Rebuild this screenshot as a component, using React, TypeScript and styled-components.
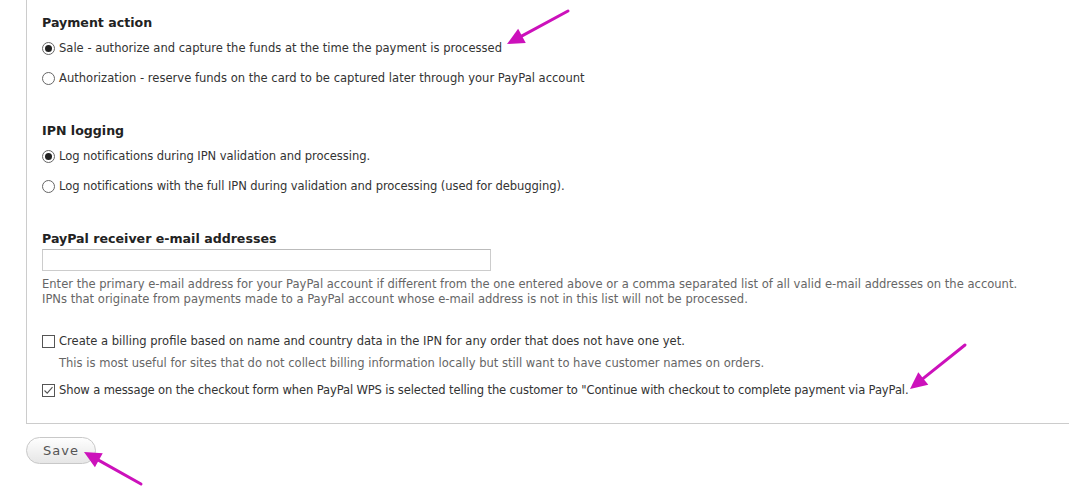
import React from 'react';
import styled, { createGlobalStyle } from 'styled-components';

const GlobalStyle = createGlobalStyle`
  html, body {
    margin: 0;
    padding: 0;
    background: #fff;
  }
  body {
    font-family: 'DejaVu Sans', Verdana, sans-serif;
    font-size: 11.55px;
    color: #333;
  }
`;

const Page = styled.div`
  position: relative;
  width: 1069px;
  height: 493px;
  overflow: hidden;
`;

const Fieldset = styled.div`
  margin-left: 26px;
  border-left: 1px solid #ccc;
  border-bottom: 1px solid #ccc;
  padding: 15px 15px 24px 15px;
  display: flex;
  flex-direction: column;
`;

const Section = styled.div<{ $gap?: number }>`
  display: flex;
  flex-direction: column;
  margin-bottom: ${(p) => p.$gap ?? 36}px;
`;

const Heading = styled.div<{ $after?: number }>`
  font-weight: bold;
  font-size: 12.6px;
  line-height: 16px;
  color: #222;
  margin-bottom: ${(p) => p.$after ?? 8}px;
`;

const OptionList = styled.div`
  display: flex;
  flex-direction: column;
  gap: 12px;
`;

const Option = styled.label`
  display: flex;
  align-items: center;
  gap: 4px;
  height: 18px;
  line-height: 18px;
  color: #333;
`;

const OptionText = styled.span<{ $spacing?: number }>`
  letter-spacing: ${(p) => p.$spacing ?? 0}px;
`;

const RadioMark = styled.span<{ $checked?: boolean }>`
  box-sizing: border-box;
  width: 13px;
  height: 13px;
  border-radius: 50%;
  border: 1px solid #666;
  background: #fff;
  display: flex;
  align-items: center;
  justify-content: center;
  flex-shrink: 0;
  &::after {
    content: '';
    width: 7px;
    height: 7px;
    border-radius: 50%;
    background: ${(p) => (p.$checked ? '#222' : 'transparent')};
  }
`;

const BoxMark = styled.span`
  box-sizing: border-box;
  width: 13px;
  height: 13px;
  border: 1px solid #555;
  background: #fff;
  display: flex;
  align-items: center;
  justify-content: center;
  flex-shrink: 0;
`;

const TextInput = styled.input`
  box-sizing: border-box;
  width: 449px;
  height: 22px;
  border: 1px solid #ccc;
  border-top-color: #bbb;
  margin: 0 0 6px 0;
  padding: 2px 4px;
`;

const Description = styled.div<{ $indent?: number; $top?: number }>`
  color: #666;
  line-height: 15px;
  padding-left: ${(p) => p.$indent ?? 0}px;
  margin-top: ${(p) => p.$top ?? 0}px;
`;

const CheckGroup = styled.div`
  display: flex;
  flex-direction: column;
`;

const CheckItem = styled.div`
  display: flex;
  flex-direction: column;
  margin-bottom: 10px;
  &:last-child {
    margin-bottom: 0;
  }
`;

const Actions = styled.div`
  padding: 13px 0 0 26px;
`;

const SaveButton = styled.button`
  box-sizing: border-box;
  width: 70px;
  height: 27px;
  border-radius: 14px;
  border: 1px solid #c8c8c8;
  background: linear-gradient(#fefefe, #e6e6e6);
  color: #555;
  font-family: 'DejaVu Sans', Verdana, sans-serif;
  font-size: 13px;
  letter-spacing: 1px;
  padding: 0;
`;

const Overlay = styled.svg`
  position: absolute;
  left: 0;
  top: 0;
  pointer-events: none;
`;

type OptionProps = { checked?: boolean; spacing?: number; children: React.ReactNode };

const Radio = ({ checked, spacing, children }: OptionProps) => (
  <Option>
    <RadioMark $checked={checked} />
    <OptionText $spacing={spacing}>{children}</OptionText>
  </Option>
);

const Checkbox = ({ checked, spacing, children }: OptionProps) => (
  <Option>
    <BoxMark>
      {checked && (
        <svg width="11" height="11" viewBox="0 0 11 11">
          <path d="M1.5 5.5 L4.2 8.2 L9.5 2.2" fill="none" stroke="#555" strokeWidth="1.1" />
        </svg>
      )}
    </BoxMark>
    <OptionText $spacing={spacing}>{children}</OptionText>
  </Option>
);

// tail -> tip, head drawn as a filled triangle at the tip
const Arrow = ({ x1, y1, x2, y2 }: { x1: number; y1: number; x2: number; y2: number }) => {
  const dx = x2 - x1;
  const dy = y2 - y1;
  const len = Math.hypot(dx, dy);
  const ux = dx / len;
  const uy = dy / len;
  const hl = 17;
  const hw = 8;
  const bx = x2 - ux * hl;
  const by = y2 - uy * hl;
  const px = -uy;
  const py = ux;
  const pts = `${x2},${y2} ${bx + px * hw},${by + py * hw} ${bx - px * hw},${by - py * hw}`;
  return (
    <g>
      <line x1={x1} y1={y1} x2={bx + ux * 2} y2={by + uy * 2} stroke="#cc11bb" strokeWidth="3" strokeLinecap="round" />
      <polygon points={pts} fill="#cc11bb" />
    </g>
  );
};

export default function App() {
  return (
    <Page>
      <GlobalStyle />
      <Fieldset>
        <Section>
          <Heading>Payment action</Heading>
          <OptionList>
            <Radio checked>Sale - authorize and capture the funds at the time the payment is processed</Radio>
            <Radio>Authorization - reserve funds on the card to be captured later through your PayPal account</Radio>
          </OptionList>
        </Section>
        <Section>
          <Heading>IPN logging</Heading>
          <OptionList>
            <Radio checked spacing={-0.06}>Log notifications during IPN validation and processing.</Radio>
            <Radio spacing={-0.07}>Log notifications with the full IPN during validation and processing (used for debugging).</Radio>
          </OptionList>
        </Section>
        <Section $gap={25}>
          <Heading $after={2}>PayPal receiver e-mail addresses</Heading>
          <TextInput type="text" />
          <Description>
            Enter the primary e-mail address for your PayPal account if different from the one entered above or a comma separated list of all valid e-mail addresses on the account.
            <br />
            IPNs that originate from payments made to a PayPal account whose e-mail address is not in this list will not be processed.
          </Description>
        </Section>
        <CheckGroup>
          <CheckItem>
            <Checkbox>Create a billing profile based on name and country data in the IPN for any order that does not have one yet.</Checkbox>
            <Description $indent={17} $top={6}>
              This is most useful for sites that do not collect billing information locally but still want to have customer names on orders.
            </Description>
          </CheckItem>
          <CheckItem>
            <Checkbox checked spacing={-0.135}>
              Show a message on the checkout form when PayPal WPS is selected telling the customer to "Continue with checkout to complete payment via PayPal.
            </Checkbox>
          </CheckItem>
        </CheckGroup>
      </Fieldset>
      <Actions>
        <SaveButton>Save</SaveButton>
      </Actions>
      <Overlay width="1069" height="493">
        <Arrow x1={568} y1={11} x2={507} y2={44} />
        <Arrow x1={965} y1={345} x2={910} y2={389} />
        <Arrow x1={141} y1={484} x2={84} y2={452} />
      </Overlay>
    </Page>
  );
}
